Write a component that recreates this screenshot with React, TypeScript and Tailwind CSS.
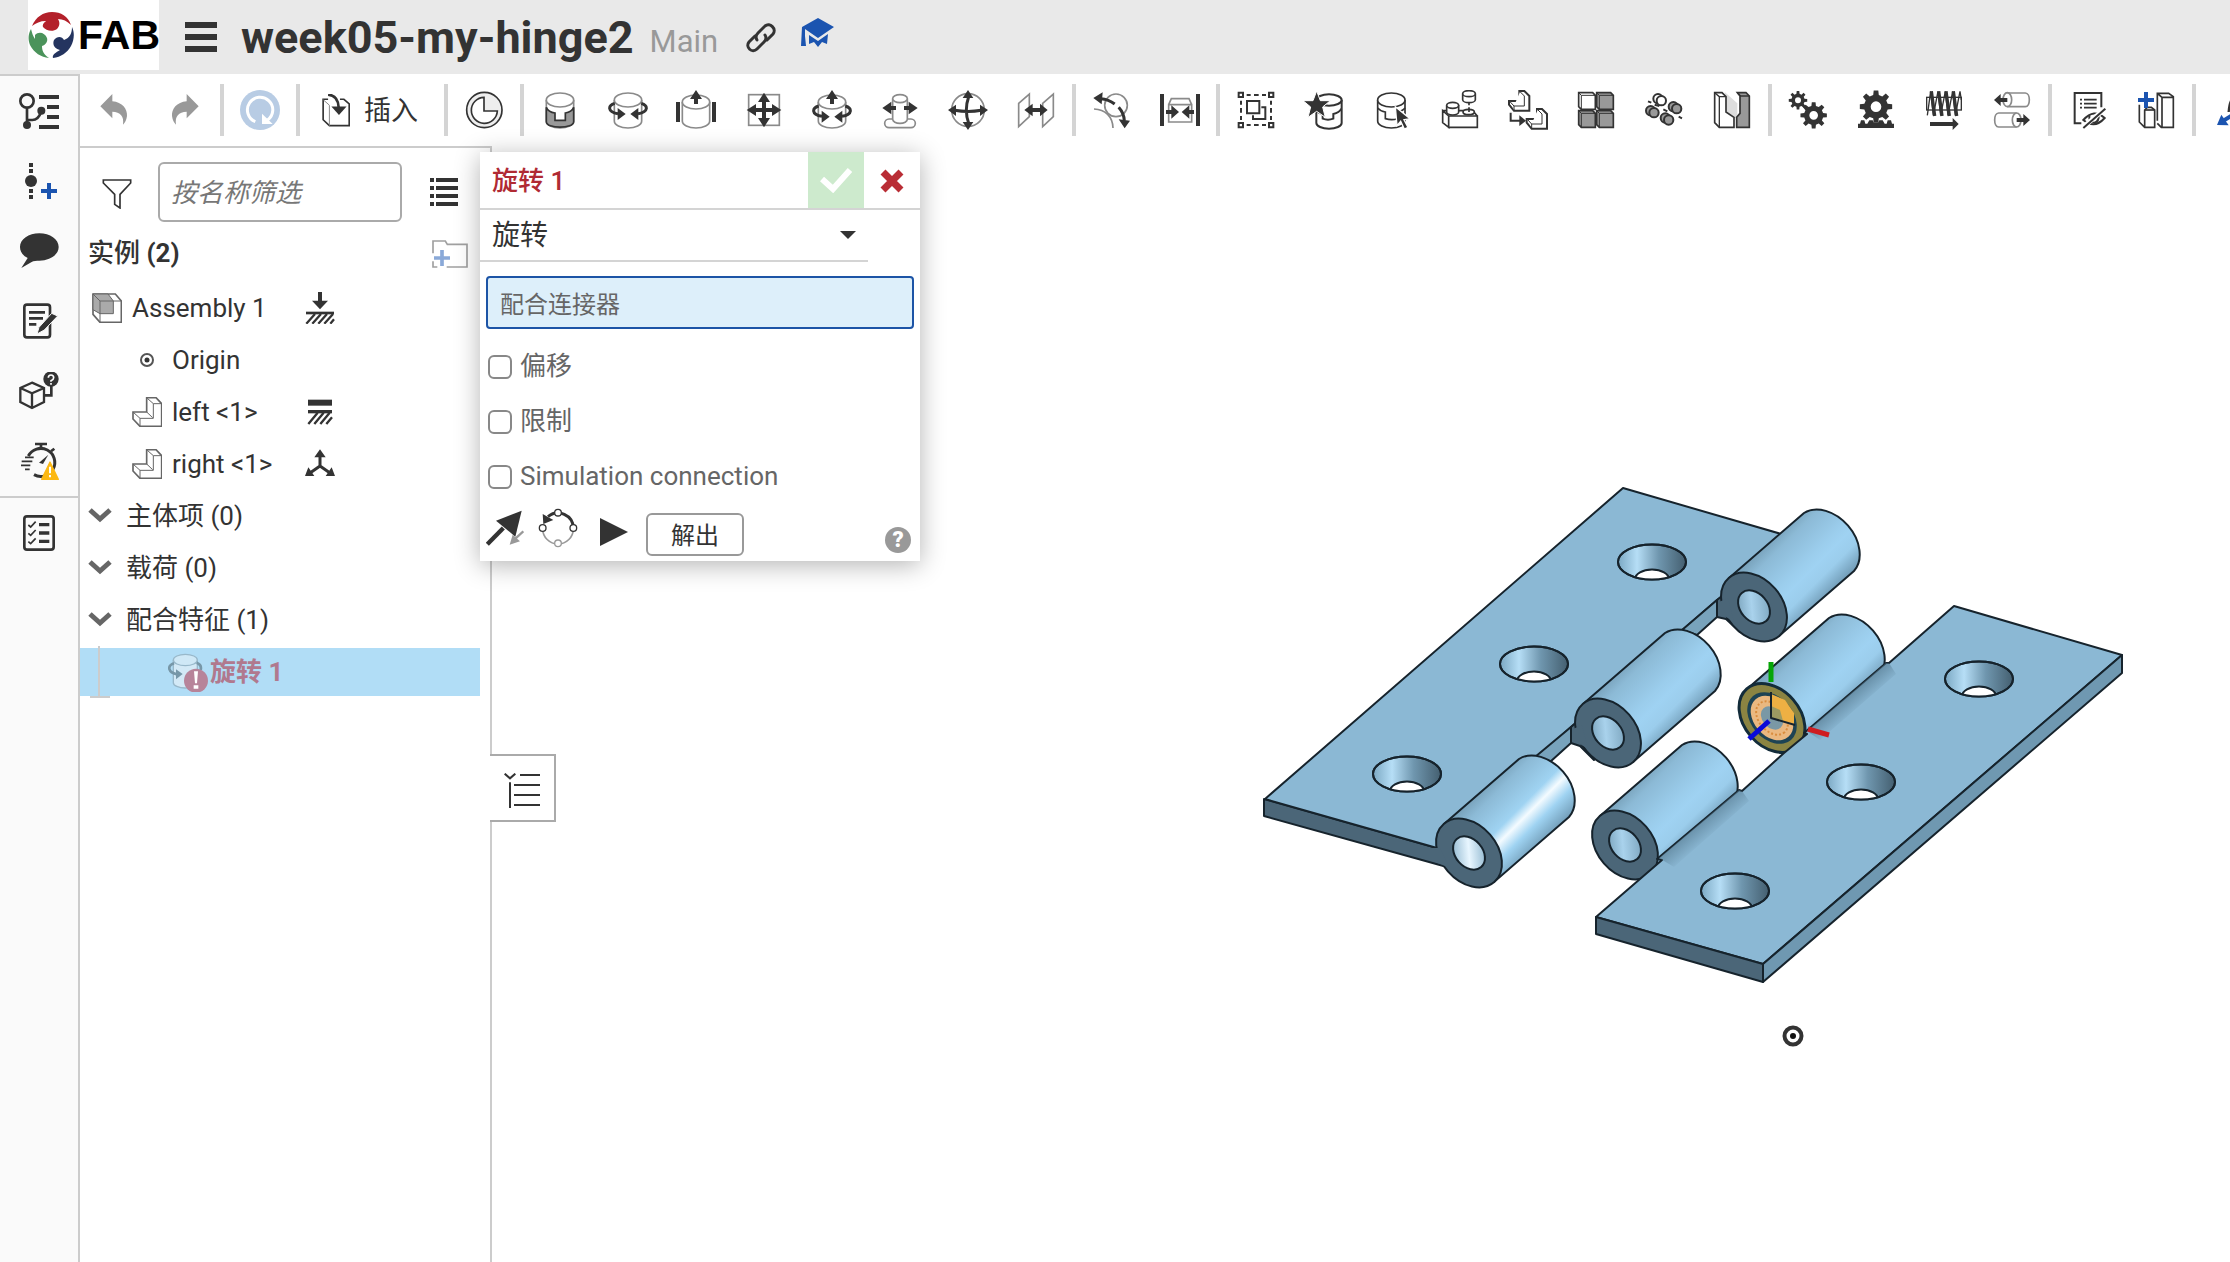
import React from "react";

const INK = "#333333";
const MID = "#8a8a8a";
const BLUE = "#1b54b0";

type IconProps = { children: React.ReactNode; className?: string };

function Icon({ children, className = "size-10" }: IconProps) {
  return (
    <svg viewBox="0 0 120 120" className={`shrink-0 ${className}`} fill="none" stroke={INK} strokeWidth={5} aria-hidden="true">
      {children}
    </svg>
  );
}

function Solid({ d, fill = INK }: { d: string; fill?: string }) {
  return <path d={d} fill={fill} stroke="none" />;
}

/* Upright cylinder with its top ellipse. */
function Cylinder({ cx = 60, top = 30, rx = 41, ry = 21, bottom = 93, stroke = MID, fill = "white", width = 5 }) {
  return (
    <g stroke={stroke} strokeWidth={width} fill={fill}>
      <path d={`M${cx - rx} ${top}V${bottom}A${rx} ${ry} 0 0 0 ${cx + rx} ${bottom}V${top}`} />
      <ellipse cx={cx} cy={top} rx={rx} ry={ry} />
    </g>
  );
}

function gearPath(cx: number, cy: number, outer: number, inner: number, teeth: number, hole: number) {
  const points: string[] = [];
  for (let i = 0; i < teeth; i++) {
    const step = (Math.PI * 2) / teeth;
    const a = i * step - Math.PI / 2;
    const spots: [number, number][] = [
      [inner, -0.3],
      [outer, -0.18],
      [outer, 0.18],
      [inner, 0.3],
    ];
    for (const [r, t] of spots) {
      points.push(`${(cx + r * Math.cos(a + t * step)).toFixed(1)} ${(cy + r * Math.sin(a + t * step)).toFixed(1)}`);
    }
  }
  return `M${points.join("L")}ZM${cx - hole} ${cy}a${hole} ${hole} 0 1 0 ${hole * 2} 0a${hole} ${hole} 0 1 0 ${-hole * 2} 0Z`;
}

const Spin = () => (
  <>
    <path d="M20 40C0 46-3 66 30 71M100 40C120 46 123 66 90 71" strokeWidth={9} />
    <Solid d="M29 54L53 72L29 90ZM91 54L67 72L91 90Z" />
  </>
);
const UpArrow = () => <Solid d="M60 0L78 27H66V42H54V27H42Z" />;

const Step = () => (
  <>
    <path d="M34 3H49L64 18V62H18L3 44V33H34Z" />
    <path d="M18 48H49V18L36 5M18 60V48L5 34" strokeWidth={3} />
  </>
);

const icons = {
  undo: (
    <Icon>
      <Solid fill="#999" d="M16 49L52 12V34C82 36 98 58 96 78C94 92 90 98 84 104C88 78 76 66 52 65V85Z" />
    </Icon>
  ),
  redo: (
    <Icon>
      <Solid fill="#999" d="M104 49L68 12V34C38 36 22 58 24 78C26 92 30 98 36 104C32 78 44 66 68 65V85Z" />
    </Icon>
  ),
  rebuild: (
    <Icon>
      <circle cx="60" cy="60" r="60" fill="#b8cce4" stroke="none" />
      <path d="M46 95A38 38 0 1 1 82 91" stroke="white" strokeWidth={9} />
      <Solid fill="white" d="M66 71V102H98Z" />
    </Icon>
  ),
  mate: (
    <Icon>
      <circle cx="61" cy="60" r="53" fill="#eeeeee" />
      <path d="M60 22V63H100A39 39 0 1 1 60 22Z" fill="white" />
    </Icon>
  ),
  fastened: (
    <Icon>
      <Cylinder />
      <path d="M19 52Q25 66 45 69V91H76V69Q95 66 101 52V95C101 117 19 117 19 95Z" fill="#999" />
    </Icon>
  ),
  revolute: (
    <Icon>
      <Cylinder />
      <Spin />
    </Icon>
  ),
  slider: (
    <Icon>
      <Cylinder top={36} />
      <UpArrow />
      <Solid d="M0 36H12V96H0ZM108 36H120V96H108Z" />
    </Icon>
  ),
  planar: (
    <Icon>
      <rect x="14" y="14" width="92" height="92" stroke={MID} />
      <Solid d="M60 8L78 36H66V54H84V42L112 60L84 78V66H66V84H78L60 112L42 84H54V66H36V78L8 60L36 42V54H54V36H42Z" />
    </Icon>
  ),
  cylindrical: (
    <Icon>
      <Cylinder top={36} />
      <UpArrow />
      <g transform="translate(0 8)">
        <Spin />
      </g>
    </Icon>
  ),
  pinSlot: (
    <Icon>
      <rect x="14" y="87" width="92" height="26" rx="13" stroke={MID} />
      <Cylinder top={26} rx={22} ry={12} bottom={88} />
      <Solid d="M7 54L34 35V48H48V60H34V73ZM113 54L86 35V48H72V60H86V73Z" />
    </Icon>
  ),
  ball: (
    <Icon>
      <circle cx="60" cy="60" r="49" stroke={MID} />
      <path d="M62 20Q48 60 62 100M20 61Q60 68 100 61" strokeWidth={9} />
      <Solid d="M60 0L76 24H44ZM60 120L76 96H44ZM0 60L24 44V78ZM120 60L96 44V78Z" />
    </Icon>
  ),
  parallel: (
    <Icon>
      <path d="M8 40L40 12V80L8 110ZM80 40L112 12V80L80 110Z" stroke={MID} fill="white" />
      <Solid d="M25 60L50 41V54H72V41L95 60L72 79V66H50V79Z" />
    </Icon>
  ),
  tangent: (
    <Icon>
      <circle cx="72" cy="46" r="34" stroke={MID} />
      <path d="M6 57C40 58 62 80 63 114" stroke={MID} />
      <path d="M26 26Q50 28 68 42M80 52Q96 70 97 92" strokeWidth={9} />
      <Solid d="M4 24L32 7L29 43ZM98 115L80 88L114 92Z" />
    </Icon>
  ),
  width: (
    <Icon>
      <Solid d="M0 12H12V108H0ZM108 12H120V108H108Z" />
      <path d="M26 44L34 26H87L95 44M26 44H95V96H26Z" stroke={MID} />
      <Solid d="M18 60H34V46L57 66L34 86V72H18ZM102 60H88V46L65 66L88 86V72H102Z" />
    </Icon>
  ),
  group: (
    <Icon>
      <path d="M32 15H44M54 15H68M78 15H90M32 105H44M54 105H68M78 105H90M15 32V44M15 54V68M15 78V90M105 32V44M105 54V68M105 78V90" strokeWidth={6} />
      <path d="M8 8h13v13H8ZM99 8h13v13H99ZM8 99h13v13H8ZM99 99h13v13H99ZM33 33H70V70H33ZM76 52H88V87H51V76" strokeWidth={6} />
    </Icon>
  ),
  favorite: (
    <Icon>
      <Cylinder cx={75} top={30} rx={38} ry={17} bottom={99} stroke={INK} width={6} />
      <path d="M37 62Q44 70 56 72V86Q72 92 88 86V72Q106 68 112 56" strokeWidth={6} />
      <path d="M38 3L49 32H79L56 51L64 82L38 64L12 82L20 51L-3 32H27Z" fill={INK} stroke="white" strokeWidth={3} />
    </Icon>
  ),
  select: (
    <Icon>
      <Cylinder cx={58} stroke={INK} />
      <path d="M17 54Q25 64 40 66V86Q60 92 76 86V66Q92 63 99 54" />
      <path d="M70 50L114 86L96 89L108 112L97 117L86 94L75 107Z" fill={INK} stroke="white" strokeWidth={4} />
    </Icon>
  ),
  blocks: (
    <Icon>
      <path d="M8 62L26 78V112L8 98ZM26 78H112V112H26ZM8 62H98L112 78" fill="white" />
      <Cylinder cx={38} top={46} rx={18} ry={9} bottom={66} stroke={INK} />
      <Cylinder cx={87} top={11} rx={19} ry={9} bottom={29} stroke={INK} />
      <ellipse cx="86" cy="66" rx="17" ry="8" fill="white" />
      <path d="M87 38V46M87 52V66" />
    </Icon>
  ),
  transform: (
    <Icon>
      <g fill="white" strokeWidth={6}>
        <Step />
      </g>
      <g fill="white" strokeWidth={6} transform="translate(53 54)">
        <Step />
      </g>
      <path d="M8 68V92H36" strokeWidth={6} />
      <Solid d="M34 76L54 92L34 108Z" />
    </Icon>
  ),
  pattern: (
    <Icon>
      {[
        [8, 8, "white"],
        [62, 8, "#999"],
        [8, 62, "#999"],
        [62, 62, "#999"],
      ].map(([x, y, fill]) => (
        <g key={`${x}-${y}`} transform={`translate(${x} ${y})`}>
          <path d="M0 0H42L50 8V50H8L0 42Z" fill={String(fill)} />
          <path d="M0 0L8 8H50M8 8V50" strokeWidth={3} />
        </g>
      ))}
    </Icon>
  ),
  replicate: (
    <Icon>
      {[
        [44, 28, "white"],
        [90, 52, "#999"],
        [22, 64, "#999"],
        [66, 86, "#999"],
      ].map(([x, y, fill]) => (
        <g key={`${x}`} fill={String(fill)} strokeWidth={6}>
          <circle cx={Number(x) - 2} cy={Number(y) - 2} r="14" />
          <circle cx={Number(x) + 8} cy={Number(y) + 4} r="14" />
        </g>
      ))}
      <path d="M12 34L22 38M58 58L70 64M104 80L114 85M32 44L46 48" strokeWidth={6} />
    </Icon>
  ),
  mirror: (
    <Icon>
      <path d="M38 6L76 40V84H66L42 62V20Z" fill="#ddd" stroke="none" />
      <path d="M8 8H30L42 20V66L66 82V112H22L8 98Z" fill="white" />
      <path d="M8 8L22 20V112M22 20H42" strokeWidth={4} />
      <path d="M76 8H102L112 18V112H74V82L84 70V18Z" fill="#999" />
      <path d="M76 8L86 18H112" strokeWidth={4} />
    </Icon>
  ),
  gears: (
    <Icon>
      <path d={gearPath(30, 31, 28, 20, 8, 9)} fill={INK} fillRule="evenodd" stroke="none" />
      <path d={gearPath(77, 76, 40, 29, 8, 13)} fill={INK} fillRule="evenodd" stroke="none" />
    </Icon>
  ),
  rack: (
    <Icon>
      <path d={gearPath(60, 50, 49, 36, 8, 16)} fill={INK} fillRule="evenodd" stroke="none" />
      <Solid d="M6 114V101H12L15 91H25L28 101H34L40 91H50L54 98H66L70 91H80L86 101H92L95 91H105L108 101H114V114Z" />
    </Icon>
  ),
  screw: (
    <Icon>
      <rect x="8" y="22" width="104" height="38" strokeWidth={4} />
      <path d="M10 76L20 4L28 76L42 4L50 76L64 4L72 76L86 4L94 76L108 4L112 30" strokeWidth={4} />
      <path d="M22 4L32 78M44 4L54 78M66 4L76 78M88 4L98 78" strokeWidth={10} />
      <Solid d="M18 96H86V84L104 102L86 120V108H18Z" />
    </Icon>
  ),
  linear: (
    <Icon>
      <g stroke={MID}>
        <path d="M46 9H100C116 9 116 50 100 50H46" />
        <ellipse cx="46" cy="29" rx="13" ry="21" />
        <path d="M74 69H20C4 69 4 111 20 111H74" />
        <ellipse cx="74" cy="90" rx="13" ry="21" />
      </g>
      <Solid d="M6 30L26 12V24H46V36H26V48ZM114 90L94 72V84H74V96H94V108Z" />
    </Icon>
  ),
  hiddenList: (
    <Icon>
      <path d="M40 100H20V9H100V52" strokeWidth={6} />
      <path d="M36 29H42M36 41H42M36 53H42M48 29H86M48 41H86M48 53H86" />
      <path d="M46 90Q78 54 110 84Q80 118 46 90Z" fill="white" strokeWidth={6} />
      <path d="M64 76Q62 96 80 98Q94 94 92 74" strokeWidth={6} />
      <path d="M44 112L112 56" stroke="white" strokeWidth={14} />
      <path d="M46 114L112 56" strokeWidth={6} />
    </Icon>
  ),
  configure: (
    <Icon>
      <path d="M10 44V96L26 112H56V60L46 52H34L26 60V112" fill="white" />
      <path d="M64 92V10H98L112 20V112H76L64 100M64 10L78 22H112M78 22V112" />
      <path d="M26 60H56" />
      <Solid fill={BLUE} d="M24 6H36V24H54V36H36V54H24V36H6V24H24Z" />
    </Icon>
  ),
  explode: (
    <Icon>
      <path d="M50 66Q52 34 64 22" strokeWidth={7} />
      <path d="M34 92L64 74" stroke={BLUE} strokeWidth={12} />
      <Solid fill={BLUE} d="M15 105L28 74L50 106Z" />
    </Icon>
  ),
};

const toolGroups: { name: string; icon: keyof typeof icons }[][] = [
  [{ name: "Mate connector", icon: "mate" }],
  [
    { name: "Fastened mate", icon: "fastened" },
    { name: "Revolute mate", icon: "revolute" },
    { name: "Slider mate", icon: "slider" },
    { name: "Planar mate", icon: "planar" },
    { name: "Cylindrical mate", icon: "cylindrical" },
    { name: "Pin slot mate", icon: "pinSlot" },
    { name: "Ball mate", icon: "ball" },
    { name: "Parallel mate", icon: "parallel" },
  ],
  [
    { name: "Tangent mate", icon: "tangent" },
    { name: "Width mate", icon: "width" },
  ],
  [
    { name: "Group", icon: "group" },
    { name: "Favorite part", icon: "favorite" },
    { name: "Select part", icon: "select" },
    { name: "Snap mode", icon: "blocks" },
    { name: "Transform", icon: "transform" },
    { name: "Linear pattern", icon: "pattern" },
    { name: "Replicate", icon: "replicate" },
    { name: "Mirror", icon: "mirror" },
  ],
  [
    { name: "Gear relation", icon: "gears" },
    { name: "Rack and pinion relation", icon: "rack" },
    { name: "Screw relation", icon: "screw" },
    { name: "Linear relation", icon: "linear" },
  ],
  [
    { name: "Display states", icon: "hiddenList" },
    { name: "Configurations", icon: "configure" },
  ],
  [{ name: "Exploded view", icon: "explode" }],
];

const railItems: { name: string; icon: React.ReactNode }[] = [
  {
    name: "Feature tree",
    icon: (
      <Icon>
        <circle cx="24" cy="27" r="20" strokeWidth={8} />
        <path d="M24 46V96M24 84H40Q58 84 66 60" strokeWidth={8} />
        <circle cx="24" cy="99" r="12" fill={INK} stroke="none" />
        <circle cx="67" cy="56" r="12" fill={INK} stroke="none" />
        <path d="M60 15H120M84 45H120M84 75H120M60 105H120" strokeWidth={12} />
      </Icon>
    ),
  },
  {
    name: "Add version",
    icon: (
      <Icon>
        <Solid d="M30 3H42V15H30ZM30 21H42V33H30ZM30 81H42V93H30ZM30 99H42V111H30Z" />
        <circle cx="36" cy="57" r="18" fill={INK} stroke="none" />
        <path d="M90 63V111M66 87H114" stroke={BLUE} strokeWidth={12} />
      </Icon>
    ),
  },
  {
    name: "Comments",
    icon: (
      <Icon>
        <Solid d="M61 4C93 4 119 22 119 45S93 86 61 86C52 86 44 86 38 90L7 108L26 78C10 70 3 58 3 45C3 22 29 4 61 4Z" />
      </Icon>
    ),
  },
  {
    name: "Notes",
    icon: (
      <Icon>
        <rect x="16" y="8" width="77" height="98" rx="8" strokeWidth={8} />
        <path d="M30 31H78M30 49H72M30 67H52" strokeWidth={8} />
        <path d="M54 96L60 76L98 34L116 42L76 84Z" fill={INK} stroke="#fafafa" strokeWidth={3} />
      </Icon>
    ),
  },
  {
    name: "Part information",
    icon: (
      <Icon>
        <path d="M39 32L75 48V90L39 108L4 90V48ZM4 48L39 64L75 48M39 64V108" strokeWidth={7} />
        <path d="M97 40V70H78" strokeWidth={8} />
        <circle cx="96" cy="21" r="23" fill={INK} stroke="none" />
        <path d="M88 17Q88 9 96 9T104 17Q104 22 96 26V29M96 33V38" stroke="white" strokeWidth={5} />
      </Icon>
    ),
  },
  {
    name: "Performance",
    icon: (
      <Icon>
        <path d="M28 42A42 42 0 1 1 45 98" strokeWidth={9} />
        <path d="M48 6H84M66 6V18M96 28L106 20" strokeWidth={8} />
        <path d="M18 46H44M8 58H40M6 70H34M18 82H32" strokeWidth={5} />
        <Solid d="M88 38L72 66L60 62Z" />
        <path d="M93 60L118 112H68Z" fill="#fcb813" stroke="#fcb813" strokeWidth={4} strokeLinejoin="round" />
        <path d="M93 74V94M93 99V106" stroke="white" strokeWidth={6} />
      </Icon>
    ),
  },
];

const Chevron = () => (
  <svg viewBox="0 0 24 16" className="h-4 w-6 shrink-0" fill="none" stroke="#666" strokeWidth="5" aria-hidden="true">
    <path d="M2 2L12 11L22 2" />
  </svg>
);

const PartIcon = () => (
  <svg viewBox="0 0 90 90" className="size-[30px] shrink-0" fill="white" stroke="#666" strokeWidth="5" aria-hidden="true">
    <path d="M44 2H72L89 20V88H24L3 66V45H44Z" />
    <path d="M3 45L24 64V88M24 64H64V20H89M64 20L46 4M44 45L62 62" strokeWidth="3" fill="none" />
  </svg>
);

const AssemblyIcon = () => (
  <svg viewBox="0 0 90 90" className="size-[30px] shrink-0" fill="white" stroke="#666" strokeWidth="5" aria-hidden="true">
    <path d="M3 3H70L88 24V88H24L3 64Z" />
    <path d="M3 3H48L64 24V62H24L3 50Z" fill="#aaa" strokeWidth="3" />
    <path d="M3 3L24 24H88M24 24V88" strokeWidth="3" fill="none" />
  </svg>
);

const GroundIcon = () => (
  <svg viewBox="0 0 90 96" className="h-8 w-[30px]" stroke={INK} aria-hidden="true">
    <path d="M45 0V30" strokeWidth="12" />
    <path d="M21 26H69L45 52Z" fill={INK} stroke="none" />
    <path d="M3 63H87" strokeWidth="8" />
    <path d="M4 95L30 66M22 95L48 66M40 95L66 66M58 95L84 66M76 95L87 82" strokeWidth="7" />
  </svg>
);

const FixedIcon = () => (
  <svg viewBox="0 0 90 96" className="h-8 w-[30px]" stroke={INK} aria-hidden="true">
    <path d="M9 20H81" strokeWidth="18" />
    <path d="M9 47H81" strokeWidth="10" />
    <path d="M10 84L38 50M28 84L56 50M46 84L74 50M64 84L81 64" strokeWidth="7" />
  </svg>
);

const FreeIcon = () => (
  <svg viewBox="0 0 90 96" className="h-8 w-[30px]" aria-hidden="true">
    <path d="M45 24V56M45 54L16 74M45 54L74 74" stroke={INK} strokeWidth="9" fill="none" />
    <path d="M45 4L62 28H28ZM0 84L10 58L28 84ZM90 84L80 58L62 84Z" fill={INK} />
  </svg>
);

function TreeRow({ pad, icon, label, state }: { pad: string; icon: React.ReactNode; label: string; state?: React.ReactNode }) {
  return (
    <li className="grid h-[52px] grid-cols-[220px_40px] items-center">
      <span className={`flex items-center whitespace-nowrap ${pad}`}>
        {icon}
        {label}
      </span>
      <span className="flex justify-center">{state}</span>
    </li>
  );
}

/* ---- Hinge model ---- */

const TX = 25;
const TY = 29;

function Barrel({ x, y, dx, dy, fill = "url(#barrel)" }: { x: number; y: number; dx: number; dy: number; fill?: string }) {
  return (
    <path
      d={`M${x - TX} ${y - TY}L${x - TX + dx} ${y - TY + dy}A38.5 28 49 0 1 ${x + TX + dx} ${y + TY + dy}L${x + TX} ${y + TY}Z`}
      fill={fill}
    />
  );
}

function BarrelFace({ x, y, bore = "url(#bore)" }: { x: number; y: number; bore?: string }) {
  return (
    <g transform={`translate(${x} ${y}) rotate(49)`}>
      <ellipse rx="38.5" ry="28" fill="#4b6678" />
      <ellipse rx="18.6" ry="13.6" fill={bore} />
    </g>
  );
}

function Countersink({ x, y }: { x: number; y: number }) {
  return (
    <g transform={`translate(${x} ${y})`}>
      <ellipse rx="34" ry="17.5" fill="url(#sink)" />
      <g clipPath="url(#sinkClip)">
        <ellipse cy="17" rx="17" ry="9.5" fill="white" />
      </g>
      <ellipse rx="34" ry="17.5" />
    </g>
  );
}

function HingeModel() {
  const barrelStops = (light: string, glare: string) => (
    <>
      <stop offset="0" stopColor="#7199b1" />
      <stop offset="0.18" stopColor="#8cbad6" />
      <stop offset="0.45" stopColor={light} />
      <stop offset="0.55" stopColor={glare} />
      <stop offset="0.68" stopColor={light} />
      <stop offset="1" stopColor="#52778f" />
    </>
  );
  return (
    <svg viewBox="1250 470 890 590" className="h-[590px] w-[890px]" role="img" aria-label="Hinge assembly" stroke="#16232c" strokeWidth="2" strokeLinejoin="round" fill="none">
      <defs>
        <linearGradient id="barrel" x1="0.22" y1="0.28" x2="0.78" y2="0.82">
          {barrelStops("#9bcdec", "#9fd2f2")}
        </linearGradient>
        <linearGradient id="barrelBright" x1="0.22" y1="0.28" x2="0.78" y2="0.82">
          {barrelStops("#9fd3f2", "#f4fbff")}
        </linearGradient>
        <linearGradient id="bore" x1="0" y1="1" x2="1" y2="0">
          <stop offset="0" stopColor="#6e97b0" />
          <stop offset="0.45" stopColor="#a9d2ec" />
          <stop offset="1" stopColor="#739cb5" />
        </linearGradient>
        <linearGradient id="boreBright" x1="0" y1="1" x2="1" y2="0">
          <stop offset="0" stopColor="#7ba8c4" />
          <stop offset="0.5" stopColor="#e8f6ff" />
          <stop offset="1" stopColor="#7ba8c4" />
        </linearGradient>
        <linearGradient id="sink">
          <stop offset="0" stopColor="#7ba8c3" />
          <stop offset="0.28" stopColor="#b6def6" />
          <stop offset="0.6" stopColor="#6f96ae" />
          <stop offset="1" stopColor="#445f70" />
        </linearGradient>
        <linearGradient id="contact" gradientUnits="userSpaceOnUse" x1="1846" y1="697" x2="1858" y2="711">
          <stop offset="0" stopColor="#4f7389" stopOpacity="0.6" />
          <stop offset="1" stopColor="#4f7389" stopOpacity="0" />
        </linearGradient>
        <linearGradient id="contactLow" gradientUnits="userSpaceOnUse" x1="1700" y1="823" x2="1712" y2="837">
          <stop offset="0" stopColor="#4f7389" stopOpacity="0.55" />
          <stop offset="1" stopColor="#4f7389" stopOpacity="0" />
        </linearGradient>
        <clipPath id="sinkClip">
          <ellipse rx="34" ry="17.5" />
        </clipPath>
      </defs>

      {/* left leaf */}
      <path d="M1264 799L1437 848L1447 867L1264 816Z" fill="#4b6678" />
      <path d="M1265 799L1623 488L1795 538L1717 600L1571 727L1437 848Z" fill="#8bb8d4" />
      <path d="M1717 600V617L1697 635L1682 630ZM1571 727V743L1550 762L1535 757Z" fill="#78a3bc" />
      <Countersink x={1652} y={562} />
      <Countersink x={1534} y={664} />
      <Countersink x={1407} y={774} />

      <path d="M1717 600V617L1726 619L1740 632L1730 590Z" fill="#4b6678" />
      <Barrel x={1754} y={607} dx={75} dy={-65} />
      <BarrelFace x={1754} y={607} />
      <path d="M1571 727V743L1580 746L1594 760L1584 716Z" fill="#4b6678" />
      <Barrel x={1608} y={733} dx={82} dy={-71} />
      <BarrelFace x={1608} y={733} />
      <Barrel x={1469} y={853} dx={75} dy={-65} fill="url(#barrelBright)" />
      <BarrelFace x={1469} y={853} bore="url(#boreBright)" />
      <g fill="#4b6678" stroke="none">
        <path d="M1719 602L1728 598L1734 622L1726 617L1719 615Z" />
        <path d="M1573 729L1582 725L1588 749L1580 744L1573 741Z" />
        <path d="M1430 848L1440 848L1450 868L1430 860Z" />
      </g>

      {/* right leaf */}
      <Barrel x={1772} y={718} dx={82} dy={-71} />
      <Barrel x={1625} y={845} dx={82} dy={-71} />
      <BarrelFace x={1625} y={845} />
      <g transform="translate(1772 718) rotate(49)">
        <ellipse rx="38.5" ry="28" fill="#8b8442" stroke="#132c3a" strokeWidth="3" />
      </g>
      <path d="M1596 917L1662 860L1657 859L1739 790L1742 791L1784 753L1807 734L1804 733L1886 663L1889 663L1954 606L2122 655L1763 964Z" fill="#8bb8d4" />
      <path d="M1807 731L1886 663L1889 663L1896 674L1820 740Z" fill="url(#contact)" stroke="none" />
      <path d="M1659 858L1739 790L1742 791L1749 801L1674 867Z" fill="url(#contactLow)" stroke="none" />
      <path d="M1763 964L2122 655V673L1763 982Z" fill="#6f98b1" />
      <path d="M1596 917L1763 964V982L1596 934Z" fill="#4b6678" />
      <Countersink x={1979} y={679} />
      <Countersink x={1861} y={782} />
      <Countersink x={1735} y={891} />

      {/* mate connector */}
      <g transform="translate(1772 718) rotate(49)" stroke="none">
        <ellipse rx="29" ry="21" fill="#1d4354" />
        <ellipse rx="25" ry="18" fill="#eab880" />
        <ellipse rx="19" ry="13" stroke="#d98d3e" strokeWidth="2" strokeDasharray="2 2" />
        <ellipse rx="13" ry="9.5" fill="#7a98a5" />
      </g>
      <path d="M1771 694L1785 700L1794 713V724L1771 718Z" fill="#eeb043" stroke="none" />
      <path d="M1771 706L1780 710L1783 721L1771 718Z" fill="#9c9a62" stroke="none" />
      <path d="M1771 692V718L1795 725" />
      <g strokeWidth="5">
        <path d="M1771 662V682" stroke="#06a506" />
        <path d="M1749 739L1769 721" stroke="#0a0ad8" />
        <path d="M1808 729L1829 735" stroke="#cf1c20" />
      </g>

      {/* origin */}
      <circle cx="1793" cy="1036" r="8.5" stroke="#333" strokeWidth="4" fill="white" />
      <circle cx="1793" cy="1036" r="3" fill="#111" stroke="none" />
    </svg>
  );
}

const Separator = () => <span className="mx-0.5 h-[52px] w-1 shrink-0 bg-[#d4d4d4]" />;

function ToolButton({ name, icon, className = "w-[68px]" }: { name: string; icon: keyof typeof icons; className?: string }) {
  return (
    <button type="button" aria-label={name} className={`flex h-full shrink-0 items-center justify-center ${className}`}>
      {icons[icon]}
    </button>
  );
}

function Header() {
  return (
    <header className="flex h-[74px] shrink-0 items-start bg-[#e9e9e9] pl-7">
      <a href="#home" aria-label="FAB" className="flex h-[70px] w-[131px] items-center gap-1 overflow-hidden bg-white">
        <svg viewBox="0 0 46 46" className="size-[46px] shrink-0" aria-hidden="true">
          <path d="M4 14C8 5 15 0 24 0C33 0 40 4 43 13C39 9 35 7 30 7C32 10 32 14 29 17C25 20 18 19 15 15C14 12 17 10 18 9C12 9 8 11 4 14Z" fill="#b3202a" />
          <path d="M3 17C0 22 0 28 2 33C6 41 13 45 21 46C15 42 14 38 14 34C18 33 20 29 19 26C17 21 11 19 7 23L7 27C5 24 4 21 3 17Z" fill="#4b935b" />
          <path d="M44 15C47 21 46 28 43 34C39 41 33 45 25 46C24 43 27 41 32 38C27 37 24 33 26 28C29 24 34 24 36 28C42 26 44 21 44 15Z" fill="#24345f" />
        </svg>
        <span className="font-['Liberation_Sans'] text-[41px] leading-none font-bold text-black">FAB</span>
      </a>
      <div className="flex h-full items-center">
        <button type="button" aria-label="Menu" className="ml-[26px] flex w-8 flex-col gap-1.5">
          <span className="h-1.5 bg-[#333]" />
          <span className="h-1.5 bg-[#333]" />
          <span className="h-1.5 bg-[#333]" />
        </button>
        <h1 className="ml-6 text-[45px] leading-none font-bold whitespace-nowrap">week05-my-hinge2</h1>
        <span className="mt-2 ml-4 text-[31px] leading-none text-[#999]">Main</span>
        <button type="button" aria-label="Copy link" className="mt-0.5 ml-7">
          <svg viewBox="0 0 30 30" className="size-[30px]" fill="none" stroke={INK} strokeWidth="3" strokeLinecap="round" aria-hidden="true">
            <path d="M11 17C9 14 10 12 12 10L19 3C24 -1 31 6 27 11L21 17" />
            <path d="M19 12C21 15 20 17 18 19L11 26C6 31 -1 24 3 19L9 13" />
          </svg>
        </button>
        <button type="button" aria-label="Learning center" className="-mt-2 ml-6">
          <svg viewBox="0 0 34 30" className="h-[30px] w-[34px]" fill={BLUE} aria-hidden="true">
            <path d="M18 0L34 9L18 20L5 11V18L6 28H1L2 9ZM9 17L18 23L28 16L27 26L22 24L18 29L14 24L9 26Z" />
          </svg>
        </button>
      </div>
    </header>
  );
}

function Toolbar() {
  return (
    <div role="toolbar" aria-label="Assembly tools" className="flex h-[72px] shrink-0 items-center overflow-hidden bg-white">
      <ToolButton name="Undo" icon="undo" className="w-[69px]" />
      <ToolButton name="Redo" icon="redo" className="w-[69px]" />
      <Separator />
      <ToolButton name="Update" icon="rebuild" />
      <Separator />
      <button type="button" className="flex h-full w-[140px] shrink-0 items-center gap-[14px] pl-5 text-[27px]">
        <svg viewBox="0 0 84 100" className="h-[33px] w-7" fill="none" stroke={INK} strokeWidth="5" aria-hidden="true">
          <path d="M18 16H3V78L22 96H82V30L66 16H54" />
          <path d="M22 96V34L4 18" strokeWidth="3" stroke={MID} />
          <path d="M18 2Q48 4 50 40" strokeWidth="8" />
          <path d="M28 38H74L51 64Z" fill={INK} stroke="none" />
        </svg>
        <span className="pt-0.5 whitespace-nowrap">插入</span>
      </button>
      {toolGroups.map((group) => (
        <React.Fragment key={group[0].name}>
          <Separator />
          {group.map((tool) => (
            <ToolButton key={tool.name} {...tool} />
          ))}
        </React.Fragment>
      ))}
    </div>
  );
}

function Rail() {
  return (
    <nav aria-label="Panels" className="w-20 shrink-0 border-t-2 border-r-2 border-[#ccc] bg-[#fafafa]">
      {railItems.map((item) => (
        <button key={item.name} type="button" aria-label={item.name} className="flex h-[70px] w-full items-center justify-center pt-0.5">
          {item.icon}
        </button>
      ))}
      <div className="border-t-2 border-[#ccc]">
        <button type="button" aria-label="Checklist" className="flex h-[70px] w-full items-center justify-center">
          <Icon>
            <rect x="16" y="10" width="88" height="100" rx="8" strokeWidth={8} />
            <path d="M60 35H91M60 60H91M60 85H91" strokeWidth={10} />
            <path d="M28 36L35 42L50 26M28 61L35 67L50 51M28 86L35 92L50 76" strokeWidth={5} />
          </Icon>
        </button>
      </div>
    </nav>
  );
}

function InstancePanel() {
  return (
    <aside className="w-[412px] shrink-0 border-t-2 border-r-2 border-[#ccc] bg-white pt-[14px] text-[26px]">
      <div className="flex h-[60px] items-center pl-[22px]">
        <button type="button" aria-label="Filter">
          <svg viewBox="0 0 90 90" className="mt-1 size-[30px]" fill="none" stroke={INK} strokeWidth="5" aria-hidden="true">
            <path d="M4 3H86V12L54 46V87L38 76V46L4 12Z" />
          </svg>
        </button>
        <input
          type="text"
          aria-label="按名称筛选"
          placeholder="按名称筛选"
          className="ml-[26px] h-[60px] w-[244px] rounded-md border-2 border-[#aaa] px-[11px] pt-0.5 italic placeholder:text-[#777]"
        />
        <button type="button" aria-label="List view" className="ml-7">
          <svg viewBox="0 0 28 28" className="size-7" fill={INK} aria-hidden="true">
            <path d="M0 0h4v4H0zM6 0h22v4H6zM0 8h4v4H0zM6 8h22v4H6zM0 16h4v4H0zM6 16h22v4H6zM0 24h4v4H0zM6 24h22v4H6z" />
          </svg>
        </button>
      </div>

      <div className="flex h-[60px] items-center justify-between pt-[3px] pr-[22px] pl-2">
        <h2 className="font-bold">
          <span className="font-medium">实例</span> (2)
        </h2>
        <button type="button" aria-label="New folder">
          <svg viewBox="0 0 108 84" className="h-7 w-9" fill="none" stroke="#a0a0a0" strokeWidth="5" aria-hidden="true">
            <path d="M3 40V3H40L46 13H105V81H44M3 64V81H16" />
            <path d="M30 30V78M6 54H54" stroke="#8aa9d8" strokeWidth="11" />
          </svg>
        </button>
      </div>

      <ul>
        <TreeRow pad="pl-3 gap-[10px]" icon={<AssemblyIcon />} label="Assembly 1" state={<GroundIcon />} />
        <TreeRow
          pad="pl-[60px] gap-[18px]"
          icon={
            <svg viewBox="0 0 14 14" className="size-[14px] shrink-0" fill="none" aria-hidden="true">
              <circle cx="7" cy="7" r="6" stroke="#555" strokeWidth="2" />
              <circle cx="7" cy="7" r="2.5" fill="#333" />
            </svg>
          }
          label="Origin"
        />
        <TreeRow pad="pl-[52px] gap-[10px]" icon={<PartIcon />} label="left <1>" state={<FixedIcon />} />
        <TreeRow pad="pl-[52px] gap-[10px]" icon={<PartIcon />} label="right <1>" state={<FreeIcon />} />
        <TreeRow pad="pl-2 gap-[14px]" icon={<Chevron />} label="主体项 (0)" />
        <TreeRow pad="pl-2 gap-[14px]" icon={<Chevron />} label="载荷 (0)" />
        <TreeRow pad="pl-2 gap-[14px]" icon={<Chevron />} label="配合特征 (1)" />
        <li className="relative mt-0.5 mr-[10px] flex h-12 items-center gap-0.5 bg-[#b1ddf6] pl-[88px]">
          <span className="absolute top-[-2px] left-[18px] h-[51px] w-0.5 bg-[#ccc]" />
          <span className="absolute top-12 left-[10px] h-0.5 w-5 bg-[#ccc]" />
          <svg viewBox="0 0 120 120" className="size-10 shrink-0" fill="none" aria-hidden="true">
            <path d="M16 24V92A36 16 0 0 0 88 92V24" fill="#d3e9f6" stroke="#98b8ca" strokeWidth="4" />
            <ellipse cx="52" cy="24" rx="36" ry="17" fill="#cfe8f6" stroke="#98b8ca" strokeWidth="4" />
            <path d="M18 34C-4 42 0 62 28 67M86 32Q102 38 98 54" stroke="#7797a8" strokeWidth="8" />
            <path d="M24 52L44 66L24 82Z" fill="#7797a8" />
            <circle cx="84" cy="86" r="36" fill="#b7849a" />
            <path d="M78 58H90L87 94H81ZM77 100H91V110H77Z" fill="white" />
          </svg>
          <span className="font-bold text-[#b0798e]">旋转 1</span>
        </li>
      </ul>
    </aside>
  );
}

function MateDialog() {
  const options = ["偏移", "限制", "Simulation connection"];
  return (
    <form aria-label="旋转 1" className="absolute top-[6px] left-[400px] h-[409px] w-[440px] bg-white text-[26px] shadow-[0_4px_24px_rgba(0,0,0,0.3)]">
      <div className="flex h-[58px] items-stretch border-b-2 border-[#d4d4d4] pl-3">
        <h2 className="flex-1 self-center pt-0.5 font-medium text-[#b02a33]">旋转 1</h2>
        <button type="button" aria-label="Accept" className="flex w-14 items-center justify-center bg-[#cdeacd]">
          <svg viewBox="0 0 32 26" className="h-[26px] w-8" fill="none" stroke="white" strokeWidth="6" aria-hidden="true">
            <path d="M2 12L13 22L30 3" />
          </svg>
        </button>
        <button type="button" aria-label="Cancel" className="flex w-14 items-center justify-center">
          <svg viewBox="0 0 24 24" className="mt-0.5 size-6" stroke="#b92d35" strokeWidth="7" aria-hidden="true">
            <path d="M3 3L21 21M21 3L3 21" />
          </svg>
        </button>
      </div>

      <div className="relative mr-[52px] h-[52px] border-b-2 border-[#d4d4d4]">
        <select aria-label="Mate type" className="h-full w-full appearance-none bg-transparent pt-0.5 pl-3 text-[28px]">
          <option>旋转</option>
        </select>
        <svg viewBox="0 0 16 8" className="pointer-events-none absolute top-[21px] right-3 h-2 w-4" fill={INK} aria-hidden="true">
          <path d="M0 0H16L8 8Z" />
        </svg>
      </div>

      <input
        type="text"
        aria-label="配合连接器"
        placeholder="配合连接器"
        className="mx-[6px] mt-[14px] block h-[53px] w-[428px] rounded border-2 border-[#1c54a6] bg-[#ddeffa] px-3 pt-1 text-2xl placeholder:text-[#666]"
      />

      <div className="mt-[10px] px-2">
        {options.map((option) => (
          <label key={option} className="flex h-[55px] items-center gap-2 text-[#666]">
            <input type="checkbox" className="size-6 shrink-0 appearance-none rounded-md border-2 border-[#888] bg-white" />
            {option}
          </label>
        ))}
      </div>

      <div className="flex items-center pl-[6px]">
        <button type="button" aria-label="Flip axis">
          <svg viewBox="0 0 114 108" className="-mt-1 h-9 w-[38px]" aria-hidden="true">
            <path d="M4 103L52 54" stroke={INK} strokeWidth="13" />
            <path d="M107 2L88 80L30 32Z" fill={INK} />
            <path d="M112 64L88 86" stroke="#999" strokeWidth="7" />
            <path d="M71 104L80 74L102 94Z" fill="#999" />
          </svg>
        </button>
        <button type="button" aria-label="Reorient" className="ml-[14px]">
          <svg viewBox="0 0 120 120" className="-mt-1 size-10" fill="none" aria-hidden="true">
            <path d="M14 62A46 46 0 0 0 106 62" stroke="#999" strokeWidth="5" />
            <path d="M106 60A46 46 0 0 0 30 26" stroke={INK} strokeWidth="9" />
            <path d="M14 18L46 36L16 48Z" fill={INK} />
            <g fill="white" strokeWidth="4">
              <circle cx="60" cy="14" r="10" stroke={INK} />
              <circle cx="14" cy="60" r="10" stroke={INK} />
              <circle cx="106" cy="60" r="10" stroke={INK} />
              <circle cx="60" cy="106" r="10" stroke="#999" />
            </g>
          </svg>
        </button>
        <button type="button" aria-label="Play" className="ml-[22px]">
          <svg viewBox="0 0 28 28" className="mt-1 size-7" fill={INK} aria-hidden="true">
            <path d="M0 0L28 14L0 28Z" />
          </svg>
        </button>
        <button type="button" className="mt-[9px] ml-[18px] h-[43px] w-[98px] rounded-md border-2 border-[#999] pt-0.5 text-2xl leading-none">
          解出
        </button>
        <button
          type="button"
          aria-label="Help"
          className="mt-5 mr-[9px] ml-auto flex size-[26px] items-center justify-center rounded-full bg-[#999] text-[22px] leading-none font-black text-white"
        >
          ?
        </button>
      </div>
    </form>
  );
}

export default function App() {
  return (
    <div className="flex min-h-screen flex-col overflow-hidden bg-white font-[Roboto,'Noto_Sans_CJK_SC',sans-serif] text-[#333]">
      <Header />
      <div className="flex flex-1">
        <Rail />
        <div className="flex min-w-0 flex-1 flex-col">
          <Toolbar />
          <div className="relative flex flex-1">
            <InstancePanel />
            <main className="relative flex-1">
              <div className="absolute top-[324px] left-[758px]">
                <HingeModel />
              </div>
              <button
                type="button"
                aria-label="Toggle panel"
                className="absolute top-[608px] -left-0.5 flex h-[68px] w-[66px] items-center justify-center border-2 border-l-0 border-[#aaa] bg-white pt-1.5"
              >
                <svg viewBox="0 0 108 108" className="size-9" fill="none" stroke={INK} strokeWidth="6" aria-hidden="true">
                  <path d="M2 2L18 16L34 2" />
                  <path d="M48 6H108M30 36H108M30 66H108M30 96H108M18 28V105" />
                </svg>
              </button>
            </main>
            <MateDialog />
          </div>
        </div>
      </div>
    </div>
  );
}
